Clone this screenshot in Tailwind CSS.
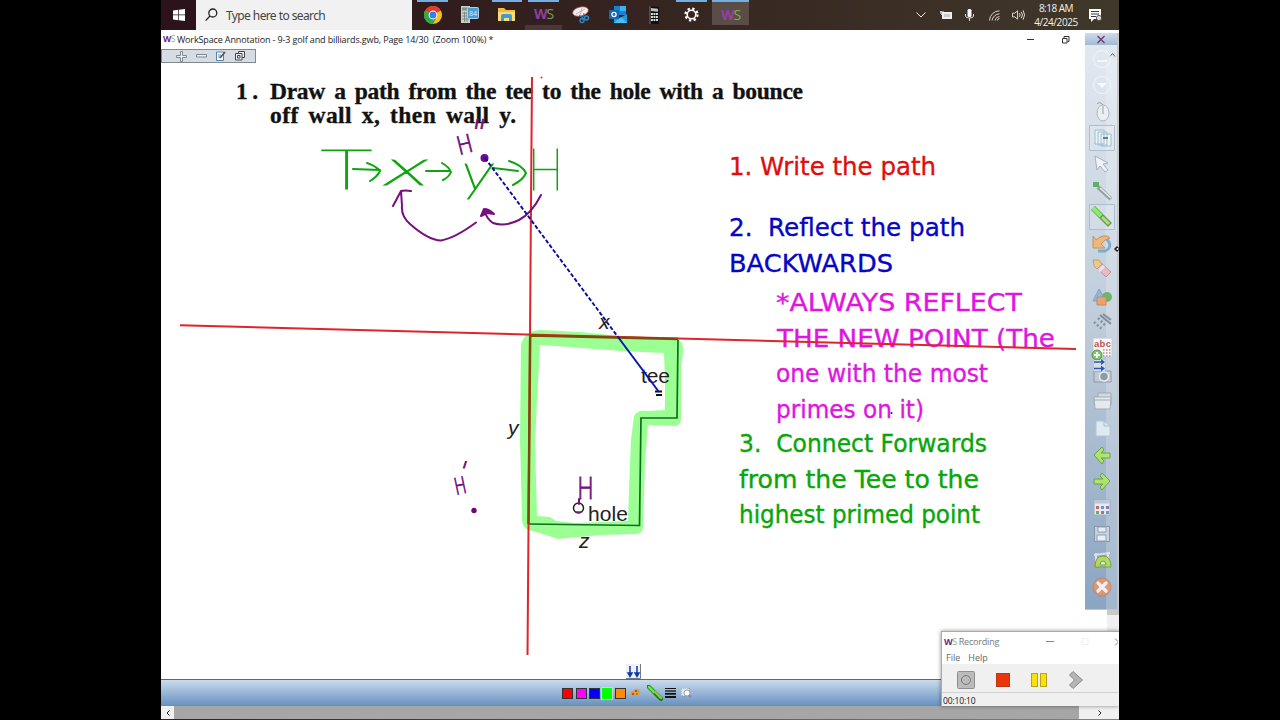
<!DOCTYPE html>
<html lang="en">

<head>
    <meta charset="UTF-8">
    <meta name="viewport" content="width=device-width, initial-scale=1.0">
    <title>WorkSpace Annotation</title>
    <script src="https://cdn.jsdelivr.net/npm/@tailwindcss/browser@4"></script>
</head>

<body class="bg-black">
    <div class="relative w-[958px] h-[720px] ml-[161px] flex flex-col overflow-hidden bg-white font-['Open_Sans','Noto_Sans',sans-serif]">

        <!-- taskbar -->
        <div class="h-[30px] shrink-0 flex items-stretch bg-linear-to-r from-[#2b121b] via-[#35241f] to-[#40382b]">
            <div class="w-[35px] flex items-center justify-center">
                <svg class="w-3 h-3" viewBox="0 0 12 12" fill="#fff"><path d="M0 1.6l5.3-.8v4.8H0zM6 .7L12 0v5.6H6zM0 6.3h5.3v4.9L0 10.4zM6 6.3h6V12l-6-.7z"/></svg>
            </div>
            <div class="w-[216px] bg-[#f1f1f1] flex items-center pl-[9px] gap-2">
                <svg class="w-[13px] h-[14px]" viewBox="0 0 13 14" fill="none" stroke="#222" stroke-width="1.3"><circle cx="7.800" cy="5" r="4"/><path d="M5 8L.6 12.6"/></svg>
                <span class="text-[12px] text-[#444] pt-px tracking-[-0.65px] [word-spacing:0.3px] font-['Noto_Sans',sans-serif]">Type here to search</span>
            </div>
            <div class="flex ml-[2px]">
                <div class="w-[37px] flex flex-col items-center">
                    <div class="w-[31px] h-[2px] bg-[#76aee2]"></div>
                    <svg class="w-[18px] h-[18px] mt-1" viewBox="0 0 18 18"><circle cx="9" cy="9" r="9" fill="#fbc116"/><path d="M9 9L1.2 4.5A9 9 0 0 1 16.8 4.5z" fill="#e33b2e"/><path d="M9 9L1.2 4.5A9 9 0 0 0 9 18l3.5-6.5z" fill="#2da94f"/><circle cx="9" cy="9" r="4.4" fill="#fff"/><circle cx="9" cy="9" r="3.4" fill="#3b7de8"/></svg>
                </div>
                <div class="w-[37px] flex flex-col items-center">
                    <svg class="w-[18px] h-[18px] mt-[6px]" viewBox="0 0 18 18"><path d="M0 0h9v17H0z" fill="#c8cfcb"/><path d="M1 1.5h7v3H1z" fill="#7f938b"/><path d="M1 7h7M1 10h7M1 13h7M3.5 6v10M6 6v10" stroke="#70807a" stroke-width=".8"/><rect x="6.500" y="1.500" width="11" height="11" rx="1" fill="#4a9cd4" stroke="#a8d4ef"/><text x="8" y="10" font-size="7" fill="#d5efff">84</text></svg>
                </div>
                <div class="w-[37px] flex flex-col items-center">
                    <div class="w-[30px] h-[2px] bg-[#76aee2]"></div>
                    <svg class="w-[17px] h-[15px] mt-[5px]" viewBox="0 0 17 15"><path d="M0 1h6l2 2h9v11H0z" fill="#f0bd3c"/><path d="M0 5h17v9H0z" fill="#ffdb74"/><path d="M3 14V9q0-2 2-2h7q2 0 2 2v5h-3v-3H6v3z" fill="#3f9bd1"/></svg>
                </div>
                <div class="w-[37px] flex flex-col items-center">
                    <div class="w-[31px] h-[2px] bg-[#76aee2]"></div>
                    <div class="h-[23px] pt-px flex items-center text-[14px] leading-none text-[#8e3fa0] font-bold tracking-[-1px]">W<span class="text-[#6ea35a] font-normal">S</span></div>
                    <div class="w-[37px] h-[5px] bg-[#4b363b]"></div>
                </div>
                <div class="w-[37px] flex flex-col items-center">
                    <svg class="w-[18px] h-[18px] mt-[6px]" viewBox="0 0 18 18"><ellipse cx="8.500" cy="5.500" rx="8" ry="4.500" fill="#f4eded" stroke="#c9443e" stroke-width=".7" transform="rotate(-14 8.500 5.500)"/><path d="M4 8l9-5M8 9l2-7" stroke="#a7a0a0" stroke-width=".7"/><path d="M7 9l5 4M12 7l-2 7" stroke="#2b86c5"/><circle cx="14.500" cy="12" r="2" fill="none" stroke="#2b86c5" stroke-width="1.500"/><circle cx="10" cy="14.500" r="2" fill="none" stroke="#2b86c5" stroke-width="1.500"/></svg>
                </div>
                <div class="w-[37px] flex flex-col items-center">
                    <svg class="w-[18px] h-[17px] mt-[6px]" viewBox="0 0 18 17"><path d="M5 0h12v9H5z" fill="#1a80d2"/><path d="M11 0h6v5h-6z" fill="#35b6f2"/><path d="M5 9l6 3 7-4v9H5z" fill="#2698e0"/><path d="M5 17l7-6 6 6z" fill="#47c0f5"/><path d="M0 4h10v9H0z" fill="#1168b5"/><circle cx="5" cy="8.500" r="2.100" fill="none" stroke="#fff" stroke-width="1.300"/></svg>
                </div>
                <div class="w-[37px] flex flex-col items-center">
                    <svg class="w-[11px] h-[18px] mt-[6px]" viewBox="0 0 11 18"><path d="M1 0l9 1v17H1z" fill="#111"/><path d="M2 2l7 .7v3L2 5z" fill="#b9c4b6"/><path d="M2 8h7M2 11h7M2 14h7" stroke="#ddd" stroke-width="1.900" stroke-dasharray="1.900 .6"/><path d="M1 0v18" stroke="#777"/></svg>
                </div>
                <div class="w-[37px] flex flex-col items-center">
                    <div class="w-[31px] h-[2px] bg-[#76aee2]"></div>
                    <svg class="w-[15px] h-[15px] mt-[5px]" viewBox="0 0 16 16" fill="none" stroke="#fff"><circle cx="8" cy="8" r="4.600" stroke-width="1.700"/><circle cx="8" cy="8" r="6.400" stroke-width="2.400" stroke-dasharray="2.500 2.526"/></svg>
                </div>
                <div class="w-[37px] h-[25px] flex flex-col items-center bg-[#5a4c47] ml-[2px]">
                    <div class="w-full h-[2px] bg-[#76aee2]"></div>
                    <div class="h-[25px] pt-[3px] flex items-center text-[14px] leading-none text-[#9440a4] font-bold tracking-[-1px]">W<span class="text-[#86ad3c] font-normal">S</span></div>
                </div>
            </div>
            <!-- tray -->
            <div class="ml-auto flex items-center pr-[17px]">
                <svg class="w-[10px] h-[6px] mr-[14px]" viewBox="0 0 10 6" fill="none" stroke="#eee"><path d="M.5.5L5 5 9.500.5"/></svg>
                <svg class="w-3 h-2 mr-[13px]" viewBox="0 0 12 8"><path d="M2 1h10v7H2z" fill="#eee"/><path d="M0 1h4M1 0v3l2 1" stroke="#eee" fill="none"/><path d="M4 3h6v3H4z" fill="#ccc"/></svg>
                <svg class="w-[9px] h-3 mr-[15px]" viewBox="0 0 9 12"><rect x="2.500" y="0" width="4" height="8" rx="1.500" fill="#fff"/><path d="M.5 5v2q0 2 4 2t4-2V5M4.500 9v3" fill="none" stroke="#ddd"/></svg>
                <svg class="w-[11px] h-[11px] mr-[12px]" viewBox="0 0 11 11" fill="none" stroke="#d5d2cc"><path d="M.5 10.500A10 10 0 0 1 10.500.8M3 10.500A8 8 0 0 1 10.500 3.800M6 10.500a5 5 0 0 1 4.500-4M8.500 10.500a2 2 0 0 1 2-2"/></svg>
                <svg class="w-[13px] h-[12px] mr-[10px]" viewBox="0 0 14 12" fill="none" stroke="#e6e3dd"><path d="M.5 4v4H3l3 2.500v-9L3 4zM8 4q1.500 2 0 4M10 2.500q2.500 3.500 0 7M12 1q3 5 0 10"/></svg>
                <div class="w-[42px] text-center text-[10px] leading-[14px] text-[#f3f1ee] tracking-[-0.5px] whitespace-nowrap"><div>8:18 AM</div><div class="-mx-1 tracking-[-0.42px]">4/24/2025</div></div>
                <svg class="w-[13px] h-[13px] ml-[12px]" viewBox="0 0 13 13"><path d="M0 0h12v10H5l-3 3v-3H0z" fill="#fff"/><path d="M2 2.500h8M2 5h8M2 7.500h5" stroke="#403830"/><circle cx="10" cy="9" r="2.600" fill="#ddd" stroke="#403830" stroke-width=".8"/></svg>
            </div>
        </div>

        <!-- title bar -->
        <div class="h-[19px] shrink-0 flex items-center pl-[2px] text-[9px] text-[#222]">
            <span class="font-bold text-[#6b2a86] tracking-[-0.5px] text-[8.5px]">W<span class="text-[#93b87c] font-normal">S</span></span>
            <span class="ml-[2px] whitespace-pre tracking-[-0.13px]">WorkSpace Annotation - 9-3 golf and billiards.gwb, Page 14/30  (Zoom 100%) *</span>
            <svg class="w-[50px] h-[10px] ml-auto mr-[48px]" viewBox="0 0 50 10" fill="none" stroke="#333"><path d="M6 4.500h7M41.500 3.500h4.500v4.500h-4.500zM43 3V1.500h5v5h-1.500"/></svg>
        </div>
        <div class="w-[95px] h-[14px] shrink-0 border border-[#83878e] bg-[#d7dce4] flex items-center pl-[14px] gap-[9px]">
            <svg class="w-[11px] h-[11px]" viewBox="0 0 11 11" fill="#eef1f5" stroke="#7d8791"><path d="M4.500.5h2v4h4v2h-4v4h-2v-4h-4v-2h4z"/></svg>
            <svg class="w-[11px] h-[4px]" viewBox="0 0 11 4" fill="#eef1f5" stroke="#7d8791"><path d="M.5.5h10v2.500H.5z"/></svg>
            <svg class="w-[10px] h-[10px] shrink-0" viewBox="0 0 10 10"><path d="M.5 1h7v8.500h-7z" fill="#fff" stroke="#4d86ad"/><path d="M2 4h3M2 6h2" stroke="#68a"/><path d="M4 7l5-6" stroke="#555" stroke-width="1.800"/></svg>
            <svg class="w-[10px] h-[10px]" viewBox="0 0 10 10" fill="#eef1f5" stroke="#444"><path d="M3.500.5h6v6h-6z"/><path d="M.5 2.500h6.500v6.500H.5zM2.500 4.500h2.500v2.500H2.500z"/></svg>
        </div>

        <!-- page -->
        <svg class="w-[958px] h-[616px] shrink-0" viewBox="161 63 958 616" fill="none">
            <g class="font-['Liberation_Serif',serif] font-bold text-[23.5px] [word-spacing:3.5px]" fill="#111" stroke="#111" stroke-width=".35">
                <text x="236" y="99" textLength="22">1.</text>
                <text x="270" y="99" textLength="533">Draw a path from the tee to the hole with a bounce</text>
                <text x="270" y="123" textLength="246">off wall x, then wall y.</text>
            </g>

            <!-- highlighted walls -->
            <path fill="#9cff94" fill-rule="evenodd" d="M521 345Q524 331 540 330L580 332 620 336 676 338Q684 341 683 352L681 368V420Q680 426 674 426L648 425 645 460 643 527Q643 533 636 534L600 535 558 539 540 533 528 530Q521 527 522 515L520 440zM540 345L537 400 535 445 537 516 550 517 556 521 575 523 628 521 629 490 631 440 634 416Q637 410 646 411L665 410V380L664 353 620 351 570 347z"/>
            <path d="M678 340l-1 78h-36l-1.500 107.500L529 524" stroke="#0b6f1c" stroke-width="1.700"/>

            <g class="font-['Liberation_Sans',sans-serif] text-[21px]" fill="#222">
                <text x="641" y="383" textLength="29">tee</text>
                <text x="588" y="521" textLength="40">hole</text>
                <g class="italic">
                    <text x="599" y="329">x</text>
                    <text x="508" y="435">y</text>
                    <text x="579" y="548">z</text>
                </g>
            </g>
            <circle cx="578.500" cy="508" r="5" stroke="#222" stroke-width="1.500"/>
            <path d="M655 391.500h7M656 395h6" stroke="#111" stroke-width="2"/>
            <path d="M575 512h6" stroke="#7d1a86" stroke-width="1.500"/>

            <!-- notes -->
            <g class="font-['Comic_Sans_MS','DejaVu_Sans',sans-serif] text-[24px]" stroke-width=".35">
                <text x="729" y="175" textLength="207" lengthAdjust="spacingAndGlyphs" fill="#e00d0d" stroke="#e00d0d">1. Write the path</text>
                <g fill="#0606c4" stroke="#0606c4">
                    <text x="729" y="236" textLength="236" lengthAdjust="spacingAndGlyphs">2.&nbsp; Reflect the path</text>
                    <text x="729" y="272" textLength="164" lengthAdjust="spacingAndGlyphs">BACKWARDS</text>
                </g>
                <g fill="#e015e0" stroke="#e015e0">
                    <text x="776" y="311" textLength="246" lengthAdjust="spacingAndGlyphs">*ALWAYS REFLECT</text>
                    <text x="777" y="347" textLength="278" lengthAdjust="spacingAndGlyphs">THE NEW POINT (The</text>
                    <text x="776" y="382" textLength="212" lengthAdjust="spacingAndGlyphs">one with the most</text>
                    <text x="776" y="418" textLength="148" lengthAdjust="spacingAndGlyphs">primes on it)</text>
                </g>
                <g fill="#08a608" stroke="#08a608">
                    <text x="739" y="452" textLength="248" lengthAdjust="spacingAndGlyphs">3.&nbsp; Connect Forwards</text>
                    <text x="739" y="488" textLength="240" lengthAdjust="spacingAndGlyphs">from the Tee to the</text>
                    <text x="739" y="523" textLength="241" lengthAdjust="spacingAndGlyphs">highest primed point</text>
                </g>
            </g>

            <!-- mirror lines -->
            <path d="M532 77L527.500 655M180 325.300L1076 349" stroke="#df242b" stroke-width="2"/>
            <path stroke="#7d4c0c" stroke-width="2.500" d="M528.500 524l1.700-188.500L678 339"/>
            <circle cx="891.500" cy="413" r="1" fill="#222"/>
            <circle cx="541.500" cy="77.500" r="1" fill="#e0262b"/>

            <!-- pen -->
            <g class="font-['Lato','Open_Sans',sans-serif] font-thin" fill="#10a510" stroke="#10a510" stroke-width="1.1">
                <text x="321" y="189" font-size="55" textLength="51" lengthAdjust="spacingAndGlyphs">T</text>
                <text x="386" y="185" font-size="50" textLength="42" lengthAdjust="spacingAndGlyphs" class="italic">x</text>
                <text x="462" y="190" font-size="52" textLength="31" lengthAdjust="spacingAndGlyphs" class="italic">y</text>
                <text x="528" y="190" font-size="58" textLength="35" lengthAdjust="spacingAndGlyphs">H</text>
            </g>
            <g stroke="#10a510" stroke-width="2" stroke-linecap="round" stroke-linejoin="round">
                <path d="M353 169l27 1M367 163q9 3 13 8-3 6-10 10M426 171h24M442 163q7 4 9 9-2 5-8 8M493 168l25 3M509 161q13 4 17 12-3 7-13 12"/>
            </g>
            <g class="font-['DejaVu_Sans',sans-serif] font-extralight" fill="#76107f" stroke="#76107f" stroke-width=".9">
                <text font-size="25" textLength="16" lengthAdjust="spacingAndGlyphs" transform="translate(459 155) rotate(-14)">H</text>
                <text font-size="34" textLength="14" lengthAdjust="spacingAndGlyphs" transform="translate(469 144)  skewX(-10)">"</text>
                <text font-size="23" textLength="12" lengthAdjust="spacingAndGlyphs" transform="translate(456 495) rotate(-12)">H</text>
                <text font-size="24" transform="translate(457 479) skewX(-18)">'</text>
                <text x="577" y="499" font-size="30" textLength="17" lengthAdjust="spacingAndGlyphs">H</text>
            </g>
            <g stroke="#76107f" stroke-width="2" stroke-linecap="round" stroke-linejoin="round">
                <path d="M579 499v5M541 195Q532 213 519 220 505 227 493 223 487 219 485 212M476 222.500Q455 238 441 240.500 428 240 410 224 401 216 402 206L401 191M393 206l8-15q4-1 10 0"/>
                <path d="M481 216l3-7q5 0 10 5l-7-1z" fill="#76107f"/>
            </g>
            <circle cx="474" cy="510.500" r="2.700" fill="#6a0878"/>
            <circle cx="484.500" cy="158" r="4" fill="#6a0a95"/>
            <path d="M485 158L618 337" stroke="#0a0a9e" stroke-width="1.900" stroke-dasharray="4 2"/>
            <path d="M618 337l41 55" stroke="#0a16b4" stroke-width="2"/>

            <!-- toolbar handle -->
            <path d="M626 664h14v15h-14z" fill="#eef2f7"/>
            <path d="M626 678.500h14.500v-14.500" stroke="#778"/>
            <path d="M630 666v9M637 666v9M628 673l2 3.500 2-3.500zM635 673l2 3.500 2-3.500z" stroke="#0b39ad" stroke-width="1.500" fill="#0b39ad"/>
        </svg>

        <!-- colour bar -->
        <div class="h-[27px] shrink-0 border-t border-t-[#53697c] bg-linear-to-b from-[#cbdcec] to-[#6690bf] flex items-center justify-center gap-[3px] pr-[27px]">
            <div class="w-[11px] h-[11px] border border-[#333] bg-[#f00]"></div>
            <div class="w-[11px] h-[11px] border border-[#333] bg-[#f0f]"></div>
            <div class="w-[11px] h-[11px] border border-[#333] bg-[#00f] -ml-[1px]"></div>
            <div class="w-[12px] h-[13px] border border-[#ccd6dc] bg-[#0f0] -ml-[2px]"></div>
            <div class="w-[11px] h-[11px] border border-[#333] bg-[#ff8a0a] -ml-[1px]"></div>
            <svg class="w-[10px] h-[10px] ml-[1px]" viewBox="0 0 10 10"><path d="M0 8Q0 3 3 3l2-2q5-1 5 3T6 8 0 8z" fill="#e59a4a"/><g fill="#7a4f22"><circle cx="3" cy="6" r="1"/><circle cx="6" cy="3" r="1"/><circle cx="7" cy="6" r=".8"/></g></svg>
            <svg class="w-[16px] h-[16px] ml-[4px]" viewBox="0 0 16 16" stroke-linecap="round"><path d="M1.500 1.500L14 14" stroke="#1f7a13" stroke-width="4"/><path d="M2 2l5 5" stroke="#63ee3c" stroke-width="2.500"/><path d="M8 7l6 6" stroke="#8dcc4d" stroke-width="2.200"/></svg>
            <svg class="w-[11px] h-[10px] -ml-[1px]" viewBox="0 0 11 10" stroke="#111"><path d="M0 .5h11" stroke-width="1"/><path d="M0 3h11" stroke-width="1.300"/><path d="M0 5.800h11" stroke-width="1.800"/><path d="M0 9h11" stroke-width="2"/></svg>
            <svg class="w-[11px] h-[10px] ml-[2px]" viewBox="0 0 11 10"><path d="M0 0h8v8H0z" fill="#dfe5ee" stroke="#7b8796" stroke-dasharray="1 1"/><circle cx="6" cy="5" r="3" fill="#fff" stroke="#9aa2b4"/><path d="M8 7l2 2" stroke="#b56cc2" stroke-width="2"/></svg>
        </div>
        <!-- scroll bar -->
        <div class="h-[13px] shrink-0 flex bg-[#a6a6a6] text-[#222]">
            <div class="w-[13px] bg-[#f0f0f0] flex items-center justify-center"><svg class="w-1 h-[6px]" viewBox="0 0 4 6" fill="none" stroke="currentColor"><path d="M3.500.5L1 3l2.500 2.500"/></svg></div>
            <div class="w-[40px] ml-auto bg-[#f0f0f0] flex items-center justify-center pl-[2px]"><svg class="w-1 h-[6px]" viewBox="0 0 4 6" fill="none" stroke="currentColor"><path d="M.5.5L3 3 .5 5.500"/></svg></div>
        </div>
        <div class="grow bg-linear-to-r from-[#3a1c20] to-[#a2803a]"></div>

        <!-- floating tool palette -->
        <div class="absolute right-0 top-[33px] w-3 h-[646px] bg-[#f0f0f0]"><div class="h-[582px] bg-[#c9c9c9]"></div></div>
        <div class="absolute left-[924px] top-[33px] w-[33px] h-[577px] flex flex-col border-r border-b border-[#c3c4bb] bg-linear-to-b from-[#e2eaf1] via-[#bfccda] to-[#8ba5c2]">
            <div class="h-[12px] shrink-0 bg-linear-to-b from-[#ccdced] to-[#a3bad4]"></div>
            <div class="grow w-[11px] mt-[14px] self-end bg-white/20"></div>
            <svg class="absolute left-0 top-0 w-[32px] h-[576px]" viewBox="1085 33 32 576" fill="none">
                <path d="M1097.500 36l7 7M1104.500 36l-7 7" stroke="#6a3468" stroke-width="1.200"/>
                <path d="M1110 56.500l2.500-3 2.500 3" stroke="#666"/>
                <g opacity=".85">
                <circle cx="1102" cy="59" r="8.500" stroke="#f8fafc"/><path d="M1097 61h10" stroke="#fff" stroke-width="1.500"/>
                <circle cx="1102" cy="85" r="8.500" stroke="#f8fafc"/><path d="M1097 83h10l-5 5z" fill="#fff"/>
                <ellipse cx="1103" cy="113" rx="6" ry="8" fill="#eef2f6" stroke="#a9b0b8"/><path d="M1103 106v8M1097 104q3-3 6 1" stroke="#8c949c"/>
                <path d="M1089.500 125.500h25v25h-25z" fill="#fff" fill-opacity=".2" stroke="#a9b9c8"/>
                <g fill="#eff7fb" stroke="#8eb8cb"><path d="M1095 130h9v14h-9zM1098 132h9v13h-9zM1101 134h10v12h-10z"/></g><path d="M1103 138h5" stroke="#666" stroke-width="2"/>
                <path d="M1095 156l13 7-5 1 5 6-3 2-5-6-3 4z" fill="#f5f7f9" stroke="#a0a8b0"/>
                <path d="M1093 182h6v5h-6z" fill="#44ac49"/><path d="M1098 187l13 12" stroke="#8a939a" stroke-width="4"/><path d="M1100 188l11 10" stroke="#eceff1" stroke-width="1.500"/>
                <path d="M1089.500 204.500h25v25h-25z" fill="#fff" fill-opacity=".2" stroke="#a9b9c8"/>
                <path d="M1093 208l17 17" stroke="#55913e" stroke-width="5.500"/><path d="M1093 208l8 8" stroke="#7cf452" stroke-width="4"/><path d="M1102 217l7 7" stroke="#a9df72" stroke-width="3"/>
                <path d="M1106 238q8 9-1 13h-7" stroke="#6aa8cd" stroke-width="3"/><path d="M1093 236v12h12l-4-4q4-5 9-6-2-3-7-2-4 1-7 4z" fill="#f7b26a" stroke="#c4864c"/>
                <path d="M1094 265l5-4 12 11-5 5z" fill="#edb5bd" stroke="#b88c90"/><path d="M1093 260h6l3 4-5 5-3-3z" fill="#f2c877" stroke="#b59a68"/><path d="M1098 270l5-5 2 2-5 5z" fill="#e9edf3"/>
                <path d="M1099 289l7 12h-13z" fill="#82b7df" stroke="#6d9dc4"/><circle cx="1107" cy="297" r="5" fill="#5cb258"/><path d="M1097 297h9v8h-9z" fill="#f09b5f" stroke="#cf7d4b"/>
                <path d="M1100 315l11 9M1103 314l8 6" stroke="#78828d" stroke-width="2"/><path d="M1094 322l9 8M1098 318l8 8" stroke="#7d8892" stroke-width="2.500" stroke-dasharray="2 2"/>
                <path d="M1093 338h19v19h-19z" fill="#fff" stroke="#c5cbd2"/>
                <text x="1094" y="347" font-size="9.500" font-weight="700" fill="#c23f3f" class="font-['Liberation_Sans',sans-serif]" textLength="17">abc</text>
                <path d="M1103 350h8M1103 353h8M1103 356h8" stroke="#b08888" stroke-width="1.500" stroke-dasharray="1.500 1.500"/>
                <circle cx="1097" cy="355" r="5" fill="#75ca53" stroke="#459037"/><path d="M1094 355h6M1097 352v6" stroke="#fff" stroke-width="2"/>
                <path d="M1094 371h17v11h-17z" fill="#c6ccd2" stroke="#8a929a"/><circle cx="1104" cy="376.500" r="4.500" fill="#8494a3" stroke="#f0f3f5" stroke-width="1.500"/><path d="M1094 360h11v11h-11z" fill="#dde5ed"/>
                <path d="M1094 362h8M1094 368.500h8" stroke="#1545ad" stroke-width="1.700"/><path d="M1101 359l4 3-4 3zM1101 365.500l4 3-4 3z" fill="#1545ad"/>
                <path d="M1098 393h13v12h-13z" fill="#d7dde4" stroke="#9ba5b0"/><path d="M1094 397h17l-1 12h-15z" fill="#eef1f4" stroke="#9ba5b0"/><path d="M1094 400h16" stroke="#9ba5b0"/>
                <path d="M1096 421h8l6 5v10h-14z" fill="#e7f2f8" stroke="#b3c8d6"/><path d="M1104 421v5h6" stroke="#a7bccb"/>
                <path d="M1094 455l8-8 2 3-3 3h9v5h-9l3 3-2 3z" fill="#b0ed55" stroke="#64983d"/>
                <path d="M1110 481l-8-8-2 3 3 3h-9v5h9l-3 3 2 3z" fill="#b0ed55" stroke="#64983d"/>
                <path d="M1094 500h16v15h-16z" fill="#f2f5f8" stroke="#9eabb8"/><path d="M1094 502h16" stroke="#bccad8" stroke-width="3"/>
                <path d="M1096 506h3v3h-3zM1101 511h3v3h-3z" fill="#cd5f5f"/><path d="M1101 506h3v3h-3zM1106 511h3v3h-3z" fill="#608fca"/><path d="M1106 506h3v3h-3z" fill="#8b62b5"/><path d="M1096 511h3v3h-3z" fill="#62aa62"/>
                <path d="M1094.500 526.500h15v15h-15z" fill="#cfd9e3" stroke="#7f91a4"/><path d="M1098 527h8v5h-8zM1097 535h9v6h-9z" fill="#f5f8fa" stroke="#8fa0b1"/>
                <path d="M1096 553v15M1094 555l16-2M1108 552v9" stroke="#e5e9ed" stroke-width="2"/><path d="M1094 561h3v7h-3z" fill="#d8955f"/><path d="M1095 567q0-11 8-11t8 11z" fill="#b6e34e" stroke="#6d9c3d"/><path d="M1100 565q0-4 3-4t3 4z" fill="#edf6df" stroke="#6d9c3d"/>
                <circle cx="1102" cy="587" r="9" fill="#ec9365" stroke="#c58068"/><path d="M1098 583l8 8M1106 583l-8 8" stroke="#fff" stroke-width="3.200" stroke-linecap="round"/>
                </g>
            </svg>
        </div>
        <!-- resize pointer at the screen edge -->
        <svg class="absolute left-[953px] top-[245px] w-[6px] h-[8px]" viewBox="0 0 6 8"><path d="M3 1l3 3-3 3-3-3z" fill="#222"/><circle cx="3.500" cy="4" r="1" fill="#fff"/></svg>

        <!-- recorder window -->
        <div class="absolute left-[780px] top-[631px] w-[178px] h-[75px] flex flex-col border-l border-t border-[#aaa] bg-white shadow-[0_0_4px_rgba(0,0,0,0.45)] text-[9px] text-[#777]">
            <div class="h-[19px] flex items-center pl-[2px]">
                <span class="font-bold text-[#6b2a86] tracking-[-0.5px]">W<span class="text-[#93b87c] font-normal">S</span></span>
                <span class="ml-[2px] tracking-[-0.18px]">Recording</span>
                <svg class="w-[76px] h-2 ml-auto mr-px" viewBox="0 0 76 8" fill="none" stroke="#888"><path d="M4 3.500h8M73 .5L76.500 4 73 7.500"/><path d="M40 .5h6v6h-6z" stroke="#eee"/></svg>
            </div>
            <div class="h-[13px] flex items-center pl-1 gap-[8px] text-[#666]"><span>File</span><span>Help</span></div>
            <div class="h-[29px] bg-[#f0f0f0] border-b border-[#d2d2d2] flex items-center pt-[3px] pl-[15px]">
                <svg class="w-[18px] h-[18px]" viewBox="0 0 18 18"><rect x=".5" y=".5" width="17" height="17" rx="1" fill="#bbb" stroke="#909090"/><circle cx="9" cy="9" r="4.500" fill="none" stroke="#777"/></svg>
                <div class="w-[14px] h-[14px] ml-[21px] bg-[#ea3508] border border-[#b8391a]"></div>
                <div class="w-[7px] h-[14px] ml-[21px] bg-[#f8e10a] border border-[#b9a21c]"></div>
                <div class="w-[7px] h-[14px] ml-[2px] bg-[#f8e10a] border border-[#b9a21c]"></div>
                <svg class="w-[14px] h-[18px] ml-[22px]" viewBox="0 0 14 18"><path d="M4 .5L13.500 9 4 17.500.5 14 5.500 9 .5 4z" fill="#b5b5b5" stroke="#888"/></svg>
            </div>
            <div class="h-[13px] bg-[#f0f0f0] flex items-center pt-[3px] pl-[1px] text-[#111] text-[8.5px] tracking-[-0.15px]">00:10:10</div>
        </div>
    </div>
</body>

</html>
